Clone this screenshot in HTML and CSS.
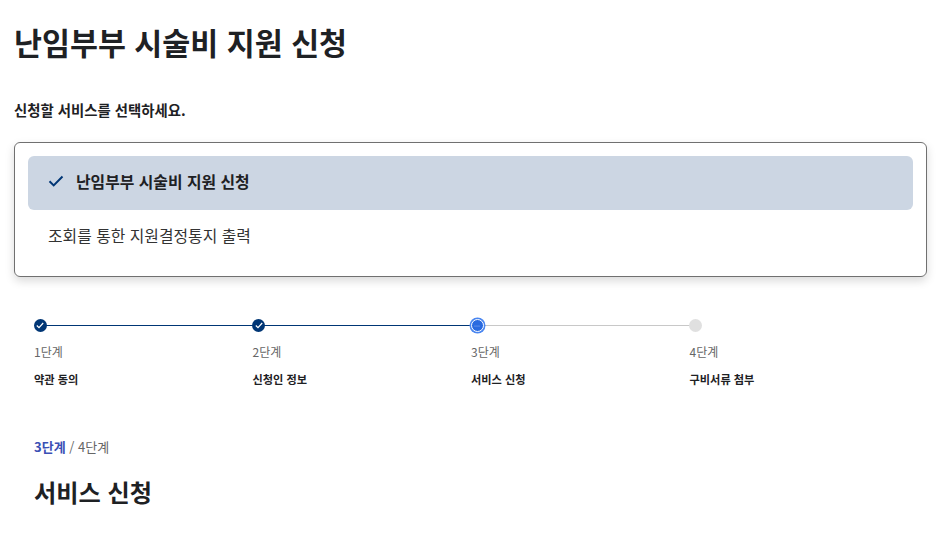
FILE: index.html
```html
<!DOCTYPE html>
<html lang="ko">
<head>
    <meta charset="UTF-8">
    <title>난임부부 시술비 지원 신청</title>
    <link rel="stylesheet" href="styles.css">
</head>
<body>
    <h1 class="page-title">난임부부 시술비 지원 신청</h1>
    <p class="select-label">신청할 서비스를 선택하세요.</p>

    <div class="service-box">
        <div class="service-item active">
            <svg class="check" width="16" height="12" viewBox="0 0 16 12"><path d="M1.5 6.2l4.2 4.2L14.5 1.5" fill="none" stroke="#003675" stroke-width="2"/></svg>
            <span>난임부부 시술비 지원 신청</span>
        </div>
        <div class="service-item">
            <span>조회를 통한 지원결정통지 출력</span>
        </div>
    </div>

    <ol class="steps">
        <li class="step done">
            <span class="dot"><svg width="8" height="7" viewBox="0 0 8 7"><path d="M.8 3.5l2.2 2.2L7.2 1" fill="none" stroke="#fff" stroke-width="1.2"/></svg></span>
            <span class="step-num">1단계</span>
            <span class="step-name">약관 동의</span>
        </li>
        <li class="step done">
            <span class="dot"><svg width="8" height="7" viewBox="0 0 8 7"><path d="M.8 3.5l2.2 2.2L7.2 1" fill="none" stroke="#fff" stroke-width="1.2"/></svg></span>
            <span class="step-num">2단계</span>
            <span class="step-name">신청인 정보</span>
        </li>
        <li class="step current">
            <span class="dot"><svg width="6" height="2" viewBox="0 0 6 2"><g fill="#9dbdf5"><circle cx="1" cy="1" r=".6"/><circle cx="3" cy="1" r=".6"/><circle cx="5" cy="1" r=".6"/></g></svg></span>
            <span class="step-num">3단계</span>
            <span class="step-name">서비스 신청</span>
        </li>
        <li class="step todo">
            <span class="dot"></span>
            <span class="step-num">4단계</span>
            <span class="step-name">구비서류 첨부</span>
        </li>
    </ol>

    <p class="step-count"><strong>3단계</strong> / 4단계</p>
    <h2 class="section-title">서비스 신청</h2>
</body>
</html>
```

FILE: styles.css
```css
body {
    font-family: "Noto Sans CJK KR", "Noto Sans", sans-serif;
    margin: 0;
    padding: 0 10px 0 14px;
    background-color: #fff;
    color: #1e2124;
    overflow: hidden;
}

.page-title {
    font-size: 30.4px;
    font-weight: 700;
    line-height: 44px;
    margin: 20px 0 0;
}

.select-label {
    font-size: 14.4px;
    font-weight: 700;
    line-height: 22px;
    margin: 35px 0 0;
}

.service-box {
    margin-top: 21px;
    padding: 13px 13px 12px;
    border: 1px solid #707070;
    border-radius: 6px;
    box-shadow: 0 4px 10px rgba(0, 0, 0, 0.15);
}

.service-item {
    display: flex;
    align-items: center;
    gap: 12px;
    height: 54px;
    padding: 0 0 4px 20px;
    box-sizing: border-box;
    font-size: 15.85px;
    font-weight: 400;
    color: #333;
    border-radius: 6px;
}

.service-item.active {
    background-color: #ccd6e3;
    color: #1e2124;
    font-weight: 700;
}

.steps {
    list-style: none;
    display: flex;
    margin: 42px 0 0;
    padding: 0 0 0 20px;
}

.step {
    position: relative;
    display: flex;
    flex-direction: column;
    width: 218.5px;
}

.dot {
    display: flex;
    align-items: center;
    justify-content: center;
    box-sizing: border-box;
    width: 13px;
    height: 13px;
    border-radius: 50%;
    margin: 0 0 11px -0.5px;
    position: relative;
    z-index: 1;
}

.step::before {
    content: "";
    position: absolute;
    top: 6px;
    left: 6px;
    width: 100%;
    height: 1px;
    background-color: #003675;
}

.step.current::before {
    background-color: #c8c8c8;
}

.step.todo::before {
    display: none;
}

.done .dot {
    background-color: #003675;
}

.current .dot {
    background-color: #2a6ae0;
    border: 1.5px solid #fff;
    box-shadow: 0 0 0 1.5px #4a86f0;
}

.todo .dot {
    background-color: #e0e0e0;
}

.step-num {
    font-size: 12px;
    line-height: 18px;
    color: #666;
}

.step-name {
    font-size: 11.2px;
    font-weight: 700;
    line-height: 16px;
    margin-top: 10px;
}

.step-count {
    font-size: 13px;
    line-height: 20px;
    margin: 50px 0 0 20px;
    color: #666;
}

.step-count strong {
    color: #3b50b5;
}

.section-title {
    font-size: 24.2px;
    font-weight: 700;
    line-height: 36px;
    margin: 17px 0 0 20px;
}
```
